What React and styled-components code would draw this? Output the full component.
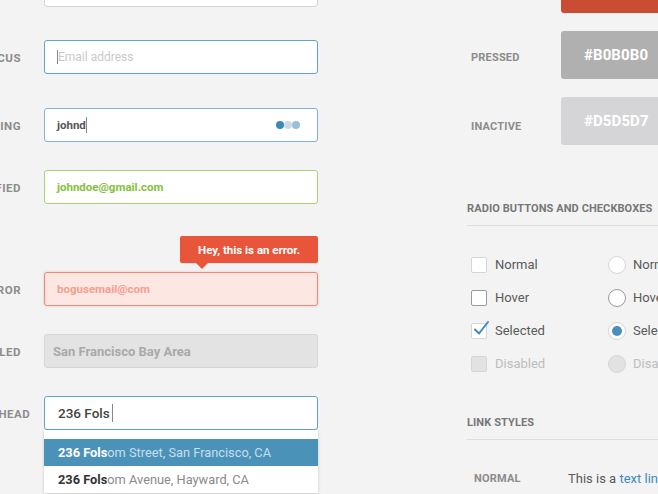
import React from 'react';
import styled, { createGlobalStyle } from 'styled-components';

const Global = createGlobalStyle`
  html, body { margin: 0; padding: 0; background: #f3f3f3; }
  body { font-family: Roboto, "Liberation Sans", sans-serif; }
  #root { width: 658px; height: 494px; overflow: hidden; }
`;

const Page = styled.div`
  width: 658px;
  height: 494px;
  overflow: hidden;
  display: flex;
  align-items: flex-start;
  gap: 149px;
`;

const LeftCol = styled.div`
  flex: none;
  margin-left: -40px;
  margin-top: -27px;
  display: flex;
  flex-direction: column;
`;

const Row = styled.div`
  display: flex;
  align-items: center;
  gap: 23px;
  margin-top: ${(p) => p.$top || 0}px;
`;

const FieldLabel = styled.div`
  width: 61px;
  text-align: right;
  font-size: 11.5px;
  font-weight: 700;
  color: #8c8c8c;
  letter-spacing: 0.5px;
  text-transform: uppercase;
  white-space: nowrap;
  padding-top: 1px;
`;

const variants = {
  normal: { border: '#d3d3d3', bg: '#fff', color: '#555', shadow: 'none' },
  focus: { border: '#62a3ca', bg: '#fff', color: '#555', shadow: 'none' },
  thinking: { border: '#7fb3d2', bg: '#fff', color: '#555', shadow: 'none' },
  verified: { border: '#a8d46f', bg: '#fff', color: '#86c13d', shadow: 'none' },
  error: { border: '#f08a74', bg: '#fde7e3', color: '#f3a08f', shadow: '0 0 3px rgba(240,120,100,0.35)' },
  disabled: { border: '#d6d6d6', bg: '#e3e3e3', color: '#a9a9a9', shadow: 'none' },
  typeahead: { border: '#62a3ca', bg: '#fff', color: '#444', shadow: 'none' },
};

const Field = styled.div`
  position: relative;
  box-sizing: border-box;
  width: 274px;
  height: 34px;
  border: 1px solid ${(p) => variants[p.$v].border};
  background: ${(p) => variants[p.$v].bg};
  box-shadow: ${(p) => variants[p.$v].shadow};
  border-radius: 3px;
  display: flex;
  align-items: center;
  padding: 0 ${(p) => (p.$v === 'disabled' ? 8 : p.$v === 'typeahead' ? 13 : 12)}px;
  color: ${(p) => variants[p.$v].color};
  font-size: ${(p) => (p.$v === 'typeahead' ? 13.5 : p.$v === 'disabled' ? 13 : 11.5)}px;
  font-weight: ${(p) => (p.$v === 'typeahead' ? 500 : 700)};
  white-space: nowrap;
`;

const Placeholder = styled.span`
  color: #c9c9c9;
  font-weight: 400;
  font-size: 12px;
`;

const Caret = styled.span`
  display: inline-block;
  width: 1px;
  height: ${(p) => p.$h || 15}px;
  background: #888;
  margin: 0 ${(p) => p.$r || 0}px 0 ${(p) => p.$l || 0}px;
`;

const Dots = styled.div`
  margin-left: auto;
  display: flex;
  margin-right: 5px;
`;

const Dot = styled.span`
  width: 8px;
  height: 8px;
  border-radius: 50%;
  background: ${(p) => p.$c};
`;

const Tooltip = styled.div`
  position: absolute;
  right: -1px;
  bottom: calc(100% + 10px);
  width: 138px;
  height: 27px;
  box-sizing: border-box;
  background: #e8553a;
  border-radius: 2px;
  color: #fff;
  font-size: 11.5px;
  font-weight: 700;
  display: flex;
  align-items: center;
  justify-content: center;
  box-shadow: 0 1px 1px rgba(0,0,0,0.08);
  &::after {
    content: '';
    position: absolute;
    left: 16px;
    top: 100%;
    border-left: 6px solid transparent;
    border-right: 6px solid transparent;
    border-top: 6px solid #e8553a;
  }
`;

const Dropdown = styled.div`
  position: absolute;
  left: -1px;
  top: calc(100% + 1px);
  width: 274px;
  background: #fff;
  padding-top: 9px;
  box-shadow: 0 1px 3px rgba(0,0,0,0.18);
`;

const Item = styled.div`
  height: 27px;
  display: flex;
  align-items: center;
  padding-left: 14px;
  font-size: 12.8px;
  font-weight: 400;
  background: ${(p) => (p.$active ? '#4b92b9' : '#fff')};
  color: ${(p) => (p.$active ? '#c6def0' : '#8a8a8a')};
  b {
    font-weight: 700;
    color: ${(p) => (p.$active ? '#fff' : '#333')};
  }
`;

const RightCol = styled.div`
  flex: none;
  width: 260px;
  margin-top: -35px;
  display: flex;
  flex-direction: column;
`;

const SwatchRow = styled.div`
  display: flex;
  align-items: center;
  margin-bottom: 18px;
`;

const SmallLabel = styled.div`
  box-sizing: border-box;
  width: ${(p) => p.$w}px;
  padding-left: ${(p) => p.$pl}px;
  margin-top: ${(p) => p.$dy || 0}px;
  font-size: 11px;
  font-weight: 700;
  color: #8c8c8c;
  text-transform: uppercase;
  letter-spacing: 0.2px;
  flex: none;
`;

const Swatch = styled.div`
  width: 140px;
  height: 48px;
  border-radius: 3px;
  background: ${(p) => p.$c};
  color: #fff;
  font-size: 15px;
  font-weight: 700;
  display: flex;
  align-items: center;
  padding-left: 23px;
  box-sizing: border-box;
  letter-spacing: 0.1px;
`;

const Heading = styled.div`
  margin-top: ${(p) => p.$top}px;
  font-size: 11px;
  line-height: 14px;
  font-weight: 700;
  color: #777;
  letter-spacing: 0.1px;
  text-transform: uppercase;
  padding-bottom: ${(p) => p.$pb}px;
  padding-top: ${(p) => p.$pt || 0}px;
  border-bottom: 1px solid #dedede;
  white-space: nowrap;
`;

const ChoiceGrid = styled.div`
  margin-top: 22px;
  padding-left: 4px;
  display: grid;
  grid-template-columns: 137px 137px;
  grid-auto-rows: 33px;
`;

const Choice = styled.div`
  display: flex;
  align-items: center;
  gap: ${(p) => (p.$radio ? 7 : 8)}px;
  font-size: 13px;
  color: ${(p) => (p.$disabled ? '#bdbdbd' : '#5a5a5a')};
  white-space: nowrap;
`;

const Box = styled.span`
  position: relative;
  box-sizing: border-box;
  width: 16px;
  height: 16px;
  border-radius: 2px;
  border: 1px solid ${(p) => (p.$state === 'hover' ? '#9a9a9a' : '#d6d6d6')};
  background: ${(p) => (p.$state === 'disabled' ? '#e2e2e2' : '#fff')};
  flex: none;
  svg { position: absolute; left: 1px; top: -4px; }
`;

const Radio = styled.span`
  box-sizing: border-box;
  width: 18px;
  height: 18px;
  border-radius: 50%;
  border: 1px solid ${(p) => (p.$state === 'hover' ? '#9a9a9a' : '#d6d6d6')};
  background: ${(p) => (p.$state === 'disabled' ? '#e2e2e2' : '#fff')};
  flex: none;
  display: flex;
  align-items: center;
  justify-content: center;
  &::after {
    content: '';
    display: ${(p) => (p.$state === 'selected' ? 'block' : 'none')};
    width: 10px;
    height: 10px;
    border-radius: 50%;
    background: #4a8fba;
  }
`;

const LinkRow = styled.div`
  margin-top: 28px;
  display: flex;
  align-items: center;
  height: 20px;
`;

const BodyText = styled.span`
  font-size: 13px;
  color: #5a5a5a;
  white-space: nowrap;
  a { color: #3b8bc0; text-decoration: none; }
`;

const Check = () => (
  <svg width="17" height="17" viewBox="0 0 17 17">
    <path d="M2 9.5 L6 13.5 L15 2" fill="none" stroke="#3f8bbd" strokeWidth="2" strokeLinecap="round" strokeLinejoin="round" />
  </svg>
);

const states = ['normal', 'hover', 'selected', 'disabled'];
const names = { normal: 'Normal', hover: 'Hover', selected: 'Selected', disabled: 'Disabled' };

export default function App() {
  return (
    <>
      <Global />
      <Page>
        <LeftCol>
          <Row>
            <FieldLabel>Default</FieldLabel>
            <Field $v="normal" />
          </Row>
          <Row $top={33}>
            <FieldLabel>Focus</FieldLabel>
            <Field $v="focus">
              <Caret $h={14} $r={0} />
              <Placeholder>Email address</Placeholder>
            </Field>
          </Row>
          <Row $top={34}>
            <FieldLabel>Thinking</FieldLabel>
            <Field $v="thinking">
              johnd<Caret $h={16} />
              <Dots>
                <Dot $c="#3e88b4" />
                <Dot $c="#c6dce9" />
                <Dot $c="#98c0d8" />
              </Dots>
            </Field>
          </Row>
          <Row $top={28}>
            <FieldLabel>Verified</FieldLabel>
            <Field $v="verified">johndoe@gmail.com</Field>
          </Row>
          <Row $top={68}>
            <FieldLabel>Error</FieldLabel>
            <Field $v="error">
              bogusemail@com
              <Tooltip>Hey, this is an error.</Tooltip>
            </Field>
          </Row>
          <Row $top={28}>
            <FieldLabel>Disabled</FieldLabel>
            <Field $v="disabled">San Francisco Bay Area</Field>
          </Row>
          <Row $top={28}>
            <FieldLabel>Typeahead</FieldLabel>
            <Field $v="typeahead">
              236 Fols<Caret $h={18} $l={2} />
              <Dropdown>
                <Item $active><b>236 Fols</b>om Street, San Francisco, CA</Item>
                <Item><b>236 Fols</b>om Avenue, Hayward, CA</Item>
              </Dropdown>
            </Field>
          </Row>
        </LeftCol>

        <RightCol>
          <SwatchRow>
            <SmallLabel $w={94} $pl={4}>Hover</SmallLabel>
            <Swatch $c="#c94c33" />
          </SwatchRow>
          <SwatchRow>
            <SmallLabel $w={94} $pl={4} $dy={4}>Pressed</SmallLabel>
            <Swatch $c="#b0b0b0">#B0B0B0</Swatch>
          </SwatchRow>
          <SwatchRow>
            <SmallLabel $w={94} $pl={4} $dy={10}>Inactive</SmallLabel>
            <Swatch $c="#d5d5d7">#D5D5D7</Swatch>
          </SwatchRow>

          <Heading $top={38} $pt={1} $pb={9}>Radio buttons and checkboxes</Heading>
          <ChoiceGrid>
            {states.map((s) => (
              <React.Fragment key={s}>
                <Choice $disabled={s === 'disabled'}>
                  <Box $state={s}>{s === 'selected' && <Check />}</Box>
                  {names[s]}
                </Choice>
                <Choice $radio $disabled={s === 'disabled'}>
                  <Radio $state={s} />
                  {names[s]}
                </Choice>
              </React.Fragment>
            ))}
          </ChoiceGrid>

          <Heading $top={35} $pt={1} $pb={9}>Link styles</Heading>
          <LinkRow>
            <SmallLabel $w={101} $pl={7}>Normal</SmallLabel>
            <BodyText>This is a <a href="#">text link</a></BodyText>
          </LinkRow>
        </RightCol>
      </Page>
    </>
  );
}
